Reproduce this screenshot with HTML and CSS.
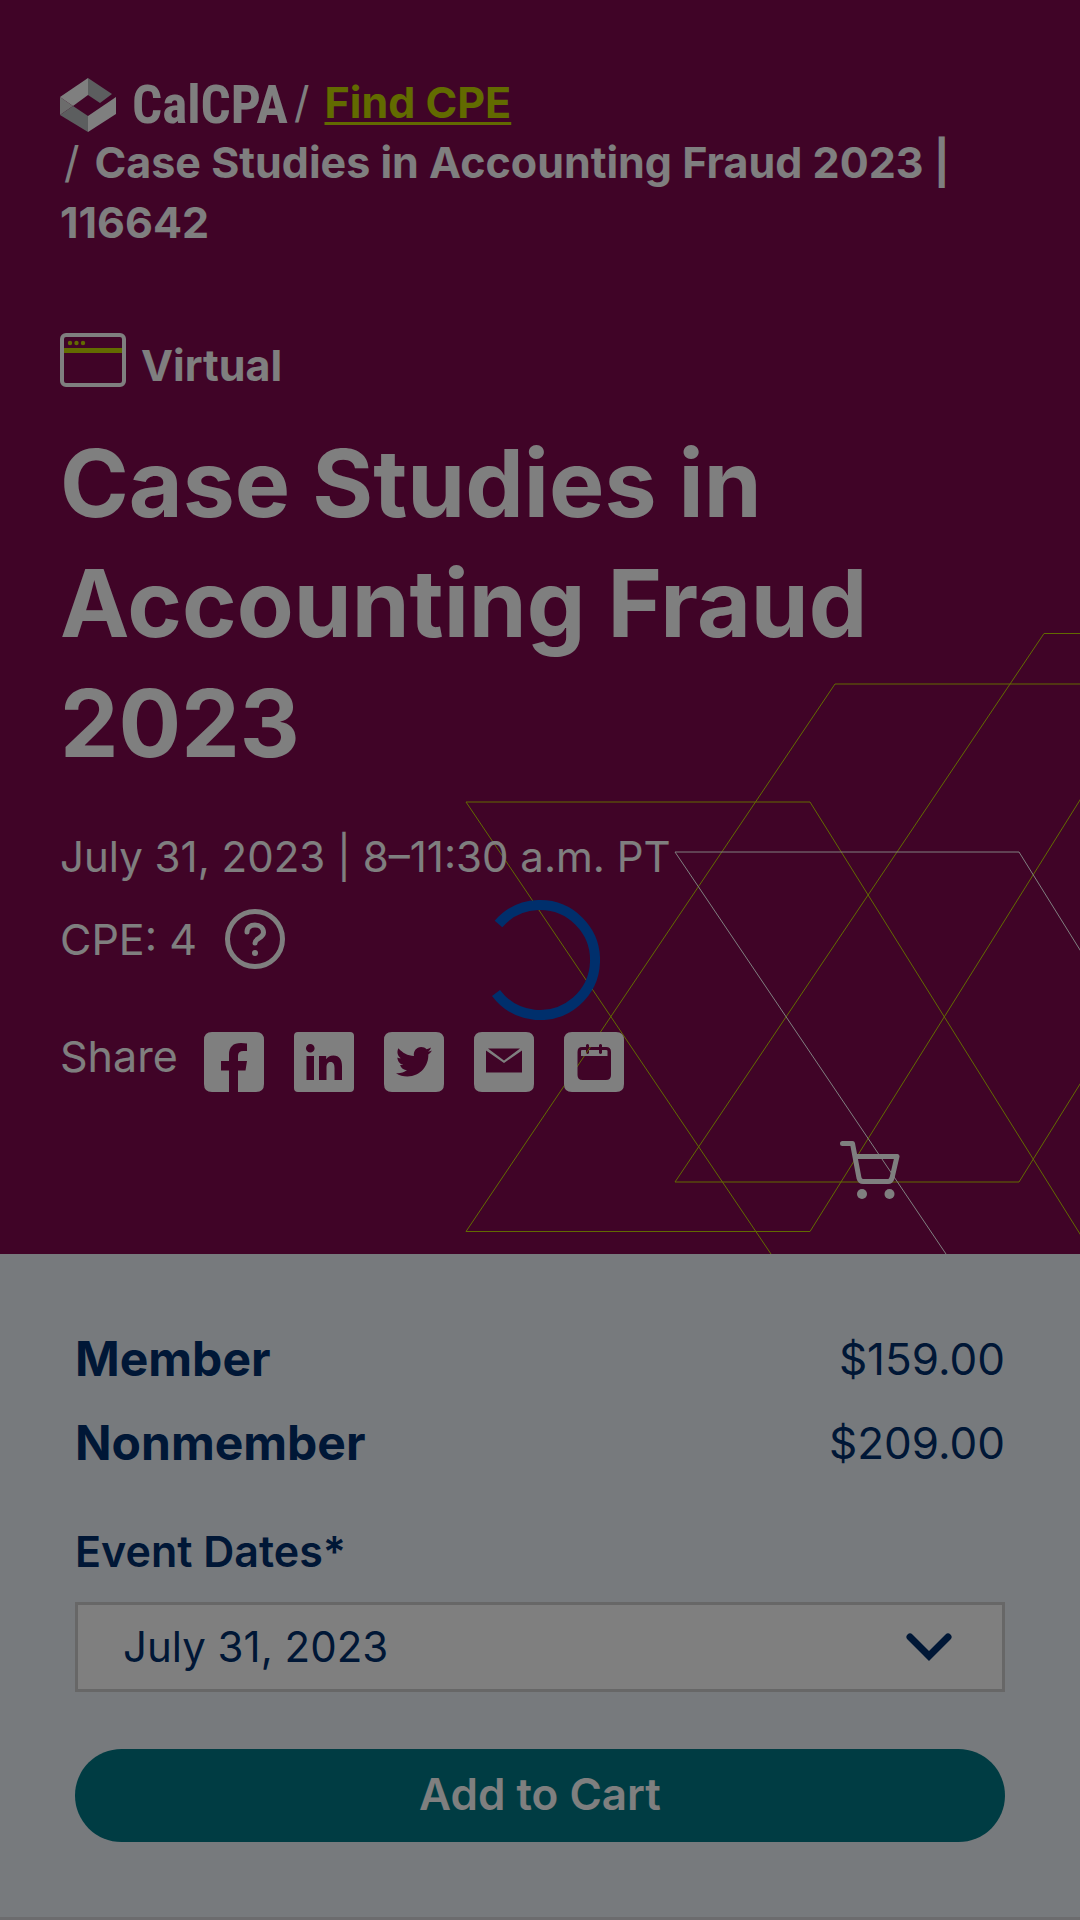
FILE: index.html
```html
<!DOCTYPE html>
<html lang="en">
<head>
<meta charset="utf-8">
<meta name="viewport" content="width=device-width, initial-scale=1">
<title>Case Studies in Accounting Fraud 2023 | CalCPA</title>
<link rel="stylesheet" href="styles.css">
</head>
<body>
<header class="hero">
  <svg class="hero-lines" viewBox="464 630 616 624" aria-hidden="true">
    <g class="line-lime">
      <path d="M771 1254L466 802H810L1090 1250"/>
      <path d="M1090 684H835L466 1231.500H810L1090 784"/>
      <path d="M1090 633.500H1044L675 1182H1019L1090 1068"/>
    </g>
    <path class="line-white" d="M946 1254L675 852H1019L1090 966"/>
  </svg>

  <nav aria-label="Breadcrumb">
    <ol class="crumbs">
      <li class="crumb-home">
        <a href="#" aria-label="CalCPA home">
          <svg class="logo" viewBox="0 0 230 56" aria-hidden="true">
            <path fill="#fff" d="M0 19L28 0V17L13 28Z"/>
            <path fill="#b9bcbf" d="M28 0L52 16L40 25L28 17Z"/>
            <path fill="#d8d8d8" d="M0 19L13 28L0 37Z"/>
            <path fill="#b9bcbf" d="M0 37L13 28L28 38V54Z"/>
            <path fill="#fff" d="M28 38L56 19V36L28 54Z"/>
            <text class="logo-word" x="72" y="45">CalCPA</text>
          </svg>
        </a>
      </li>
      <li class="crumb"><span class="slash">/</span><a class="crumb-link" href="#">Find CPE</a></li>
      <li class="crumb crumb-current"><span class="slash">/</span>Case Studies in Accounting Fraud 2023 | 116642</li>
    </ol>
  </nav>

  <div class="format">
    <svg class="format-icon" viewBox="0 0 66 54" aria-hidden="true">
      <rect x="2" y="2" width="62" height="50" rx="4" fill="none" stroke="#fff" stroke-width="4"/>
      <path d="M4 17.500H62" stroke="#c4d600" stroke-width="5"/>
      <g fill="#c4d600"><circle cx="10" cy="10" r="2.200"/><circle cx="16.500" cy="10" r="2.200"/><circle cx="23" cy="10" r="2.200"/></g>
    </svg>
    <span class="format-name">Virtual</span>
  </div>

  <h1 class="title">Case Studies in Accounting Fraud 2023</h1>
  <p class="meta date">July 31, 2023 | 8–11:30 a.m. PT</p>
  <div class="meta credits">
    <span>CPE: 4</span>
    <button class="help" type="button" aria-label="About CPE credits">
      <svg viewBox="0 0 60 60" fill="none" stroke="#fff" stroke-linecap="round" aria-hidden="true">
        <circle cx="30" cy="30" r="27.500" stroke-width="5"/>
        <path d="M22 23C22 18 25.500 16 30 16C35 16 38.500 19 38.500 23.500C38.500 29 30 29 30 34" stroke-width="5"/>
        <circle cx="30" cy="44" r="3" fill="#fff" stroke="none"/>
      </svg>
    </button>
  </div>
  <div class="share">
    <span class="meta">Share</span>
    <div class="share-links">
      <a href="#" aria-label="Facebook"><svg viewBox="0 0 60 60" fill="#fff" fill-rule="evenodd"><path d="M8 0H52Q60 0 60 8V52Q60 60 52 60H34V38.500H41.500L43 29H34V24Q34 19 39.500 19H43V11.500Q40 11 37 11Q25 11 25 22.500V29H17V38.500H25V60H8Q0 60 0 52V8Q0 0 8 0Z"/></svg></a>
      <a href="#" aria-label="LinkedIn"><svg viewBox="0 0 60 60" fill="#fff" fill-rule="evenodd"><path d="M4 0H56Q60 0 60 4V56Q60 60 56 60H4Q0 60 0 56V4Q0 0 4 0ZM12.500 24V48H20V24ZM16.300 12A4.300 4.300 0 1 0 16.300 20.600A4.300 4.300 0 1 0 16.300 12ZM25 24V48H32.500V36C32.500 32.500 33.500 30 36.500 30C39.500 30 40.500 32.500 40.500 36V48H48V34.500C48 27.500 45.500 23.500 39.500 23.500C36 23.500 33.500 25 32.200 27.200V24Z"/></svg></a>
      <a href="#" aria-label="Twitter"><svg viewBox="0 0 60 60" fill="#fff" fill-rule="evenodd"><path d="M8 0H52Q60 0 60 8V52Q60 60 52 60H8Q0 60 0 52V8Q0 0 8 0ZM48 18.500C46.700 19.100 45.400 19.400 44 19.600C45.500 18.800 46.500 17.400 47 15.600C45.700 16.400 44.200 17 42.600 17.300C41.200 15.700 39.300 14.900 37.200 14.900C32.400 14.900 28.900 19.300 30 24.100C23.900 23.800 18.300 20.900 14.500 16.300C12.500 19.700 13.500 24.100 16.800 26.300C15.600 26.300 14.500 25.900 13.400 25.400C13.400 28.900 15.900 32 19.400 32.800C18.300 33.100 17.200 33.100 16.100 32.900C17 35.900 19.800 38 23 38C19.800 40.500 15.900 41.600 12 41.200C15.300 43.300 19.200 44.500 23.300 44.500C37 44.500 44.800 32.900 44.300 22.500C45.800 21.400 47 20.100 48 18.500Z"/></svg></a>
      <a href="#" aria-label="Email"><svg viewBox="0 0 60 60" fill="#fff" fill-rule="evenodd"><path d="M8 0H52Q60 0 60 8V52Q60 60 52 60H8Q0 60 0 52V8Q0 0 8 0ZM12 18.500V40.500H48V18.500L30 31ZM14 16.500L30 28.500L46 16.500Z"/></svg></a>
      <a href="#" aria-label="Add to calendar"><svg viewBox="0 0 60 60" fill="#fff" fill-rule="evenodd"><path d="M8 0H52Q60 0 60 8V52Q60 60 52 60H8Q0 60 0 52V8Q0 0 8 0ZM18 15Q13.500 15 13.500 20V43Q13.500 48 18.500 48H42Q47 48 47 43V20Q47 15 42 15H38V13Q36.500 11 35 13V15H25V13Q23.500 11 22 13V15ZM17 24V19Q17 18 18 18H22V21Q23.500 23 25 21V18H35V21Q36.500 23 38 21V18H42Q43.500 18 43.500 19V24Z"/></svg></a>
    </div>
  </div>

  <a class="cart" href="#" aria-label="Cart">
    <svg viewBox="0 0 60 58" fill="none" stroke="#fff" stroke-width="5" stroke-linecap="round" stroke-linejoin="round" aria-hidden="true">
      <path d="M2.500 2.500H12.500L19 37Q20 40.500 23 40.500H48Q51 40.500 52 37L57 15.500H15.500"/>
      <circle cx="22" cy="53" r="5" fill="#fff" stroke="none"/><circle cx="49.500" cy="53" r="5" fill="#fff" stroke="none"/>
    </svg>
  </a>
</header>

<main class="panel">
  <dl class="prices">
    <div class="price-row"><dt>Member</dt><dd>$159.00</dd></div>
    <div class="price-row"><dt>Nonmember</dt><dd>$209.00</dd></div>
  </dl>
  <form class="order">
    <label class="field-label" for="event-date">Event Dates*</label>
    <div class="select-wrap">
      <select class="date-select" id="event-date"><option>July 31, 2023</option></select>
      <svg class="chevron" viewBox="0 0 46 28" aria-hidden="true"><path d="M4 4L23 23L42 4" fill="none" stroke="#002f6c" stroke-width="7" stroke-linecap="round"/></svg>
    </div>
    <button class="add" type="button">Add to Cart</button>
  </form>
</main>

<div class="overlay" role="status" aria-label="Loading">
  <svg class="spinner" viewBox="0 0 120 120" aria-hidden="true"><path d="M18.500 24A55 55 0 1 1 16 93" fill="none" stroke="#002f6c" stroke-width="10"/></svg>
</div>
</body>
</html>
```
FILE: styles.css
```css
* {
  box-sizing: border-box;
}

body {
  margin: 0;
  min-height: 100vh;
  background: #e6eaf0;
  color: #002f6c;
  font-family: Inter, "Open Sans", sans-serif;
  font-size: 43px;
  line-height: 60px;
}

svg {
  display: block;
}

/* Hero */
.hero {
  position: relative;
  padding: 72px 60px 162px;
  background: #80084e;
  color: #fff;
}

.hero-lines {
  position: absolute;
  right: 0;
  bottom: 0;
  width: 616px;
  height: 624px;
  fill: none;
}

.line-lime {
  stroke: #c4d600;
}

.line-white {
  stroke: #fff;
}

.hero > nav,
.format,
.title,
.hero > .meta,
.share {
  position: relative;
}

.crumbs {
  display: flex;
  flex-wrap: wrap;
  margin: 0;
  padding: 0;
  list-style: none;
  font-weight: 700;
}

.crumb-home {
  height: 60px;
  padding-top: 6px;
}

.crumb-current {
  flex-basis: 100%;
}

.logo {
  width: 230px;
  height: 56px;
  overflow: visible;
}

.logo-word {
  fill: #fff;
  font-family: "Liberation Sans Narrow", "Roboto Condensed", "Open Sans Condensed", "Liberation Sans", sans-serif;
  font-size: 53px;
  font-weight: 700;
}

.slash {
  padding: 0 15px 0 4px;
  font-weight: 400;
}

.crumb-link {
  color: #c4d600;
  text-decoration-thickness: 3px;
  text-underline-offset: 4px;
}

.format {
  display: flex;
  align-items: flex-start;
  gap: 15px;
  margin-top: 81px;
  font-weight: 700;
}

.format-icon {
  width: 66px;
  height: 54px;
}

.format-name {
  padding-top: 2px;
}

.title {
  margin: 28px 0 0;
  font-size: 93px;
  font-weight: 700;
  line-height: 120px;
}

.meta {
  margin: 0;
}

.hero > .date {
  margin-top: 44px;
  font-size: 42px;
}

.credits {
  display: flex;
  align-items: center;
  gap: 28px;
  margin-top: 22px;
}

.help {
  width: 60px;
  height: 60px;
  padding: 0;
  border: 0;
  background: none;
}

.share {
  display: flex;
  align-items: flex-start;
  gap: 26px;
  margin-top: 57px;
}

.share-links {
  display: flex;
  gap: 30px;
  padding-top: 6px;
}

.share-links a {
  width: 60px;
  height: 60px;
}

.cart {
  position: absolute;
  right: 180px;
  bottom: 55px;
  width: 60px;
  height: 58px;
}

/* Purchase panel */
.panel {
  padding: 75px;
  border-bottom: 3px solid #d8d9dc;
  background: #eff4fa;
}

.prices {
  margin: 0;
}

.price-row {
  display: flex;
  justify-content: space-between;
  height: 84px;
}

.price-row dt {
  font-size: 48px;
  font-weight: 700;
}

.price-row dd {
  margin: 0;
  font-size: 44px;
}

.order {
  display: flex;
  flex-direction: column;
}

.field-label {
  margin: 24px 0 21px;
  font-weight: 600;
}

.select-wrap {
  display: grid;
  align-items: center;
}

.date-select {
  grid-area: 1 / 1;
  width: 100%;
  height: 90px;
  padding: 0 100px 0 45px;
  appearance: none;
  border: 3px solid #cecece;
  border-radius: 0;
  background: #fff;
  color: inherit;
  font: inherit;
  font-size: 42px;
}

.chevron {
  grid-area: 1 / 1;
  justify-self: end;
  width: 46px;
  height: 28px;
  margin-right: 53px;
  pointer-events: none;
}

.add {
  height: 93px;
  margin-top: 57px;
  padding-bottom: 4px;
  border: 0;
  border-radius: 47px;
  background: #007987;
  color: #fff;
  font: inherit;
  font-size: 44px;
  font-weight: 600;
}

/* Loading state */
.overlay {
  position: fixed;
  inset: 0;
  display: grid;
  place-items: center;
  background: rgba(0, 0, 0, 0.5);
}

.spinner {
  width: 120px;
  height: 120px;
}
```
